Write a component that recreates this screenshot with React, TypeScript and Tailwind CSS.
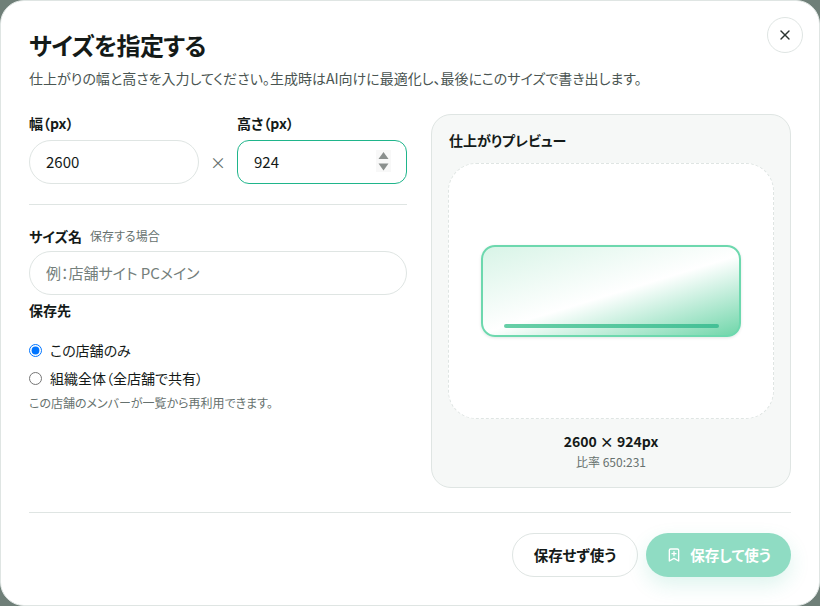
import React from 'react';
import { BookmarkPlus, X } from 'lucide-react';

const FONT = "font-['Noto_Sans_CJK_JP','Noto_Sans',sans-serif] [font-feature-settings:'palt']";

export default function App() {
  return (
    <div className={`h-[606px] w-[820px] overflow-hidden bg-[#6f7f78] ${FONT}`}>
      <div className="relative flex h-[606px] w-[820px] flex-col rounded-[24px] border border-[#dfe5e3] bg-white px-[28px] pt-[27px] text-[#141a18]">
        <button className="absolute right-[16px] top-[16px] flex h-[36px] w-[36px] items-center justify-center rounded-full border border-[#dfe5e3] bg-white text-[#2b3431]">
          <X className="h-4 w-4" strokeWidth={2} />
        </button>

        {/* Header */}
        <h2 className="text-[24px] font-bold leading-[34px] tracking-[-0.6px]">サイズを指定する</h2>
        <p className="mt-[6px] text-[14px] leading-[20px] text-[#4a5552]">
          仕上がりの幅と高さを入力してください。生成時はAI向けに最適化し、最後にこのサイズで書き出します。
        </p>

        <div className="mt-[26px] grid grid-cols-[378px_360px] gap-[24px]">
          {/* Inputs */}
          <div className="flex flex-col">
            <div className="flex items-end">
              <label className="flex w-[170px] flex-col gap-[8px]">
                <span className="text-[14px] font-bold leading-[18px]">幅（px）</span>
                <input
                  type="number"
                  defaultValue={2600}
                  className="h-[44px] rounded-[22px] border border-[#dfe5e3] bg-white px-[16px] pb-[2px] text-[15px] outline-none [appearance:textfield] [&::-webkit-inner-spin-button]:appearance-none"
                />
              </label>
              <span className="flex h-[44px] w-[38px] items-center justify-center text-[16px] text-[#66716e]">×</span>
              <label className="flex w-[170px] flex-col gap-[8px]">
                <span className="text-[14px] font-bold leading-[18px]">高さ（px）</span>
                <span className="relative block">
                  <input
                    type="number"
                    defaultValue={924}
                    className="h-[44px] w-full rounded-[12px] border border-[#1fb58b] bg-white px-[16px] pb-[2px] text-[15px] outline-none [appearance:textfield] [&::-webkit-inner-spin-button]:appearance-none"
                  />
                  {/* spin button */}
                  <span className="absolute right-[16px] top-[10px] block h-[22px] w-[15px] bg-[#f8f8f8]">
                    <svg viewBox="0 0 15 22" className="h-[22px] w-[15px]" fill="#8a8f8d">
                      <path d="M7.5 2 L12.5 9 H2.5 Z" />
                      <path d="M7.5 20.5 L12.5 13.5 H2.5 Z" />
                    </svg>
                  </span>
                </span>
              </label>
            </div>

            <div className="mt-[20px] border-t border-[#dfe5e3]" />

            <div className="mt-[21px] flex items-center gap-[8px] leading-[20px]">
              <span className="text-[14px] font-bold">サイズ名</span>
              <span className="text-[12px] text-[#66716e]">保存する場合</span>
            </div>
            <input
              placeholder="例：店舗サイト PCメイン"
              className="mt-[5px] h-[44px] rounded-[22px] border border-[#dfe5e3] bg-white px-[16px] pb-[2px] text-[15px] outline-none placeholder:text-[#75807c]"
            />

            <div className="mt-[5px] text-[14px] font-bold leading-[20px]">保存先</div>

            <label className="mt-[20px] flex h-[20px] items-center gap-[8px] text-[14px] leading-[20px]">
              <input type="radio" name="scope" defaultChecked className="m-0 h-[13px] w-[13px]" />
              この店舗のみ
            </label>
            <label className="mt-[8px] flex h-[20px] items-center gap-[8px] text-[14px] leading-[20px]">
              <input type="radio" name="scope" className="m-0 h-[13px] w-[13px]" />
              組織全体（全店舗で共有）
            </label>
            <p className="mt-[7px] text-[12px] leading-[16px] text-[#66716e]">この店舗のメンバーが一覧から再利用できます。</p>
          </div>

          {/* Preview */}
          <div className="flex h-[374px] flex-col rounded-[20px] border border-[#dfe5e3] bg-[#f6f8f7] px-[16px] pt-[16px]">
            <div className="ml-[1px] text-[14px] font-bold leading-[18px]">仕上がりプレビュー</div>
            <div className="mt-[14px] flex h-[256px] items-center justify-center rounded-[28px] border border-dashed border-[#dfe5e3] bg-white">
              <div className="relative h-[92px] w-[260px] rounded-[14px] border-2 border-[#6dd8ae] bg-[linear-gradient(163deg,#d8f4e7_0%,#ffffff_52%,#70d6aa_100%)] shadow-[0_1px_3px_rgba(20,60,45,0.12)]">
                <div className="absolute bottom-[7px] left-[21px] h-[4px] w-[215px] rounded-full bg-gradient-to-r from-[#67cfa7] to-[#43c096]" />
              </div>
            </div>
            <div className="mt-[12px] text-center text-[14px] font-bold leading-[20px]">2600 × 924px</div>
            <div className="mt-[3px] text-center text-[12px] leading-[16px] text-[#66716e]">比率 650:231</div>
          </div>
        </div>

        {/* Footer */}
        <div className="mt-[24px] flex justify-end gap-[8px] border-t border-[#dfe5e3] pt-[20px]">
          <button className="h-[44px] w-[126px] rounded-[22px] border border-[#dfe5e3] bg-white text-[14.5px] font-bold">保存せず使う</button>
          <button className="flex h-[44px] w-[145px] items-center justify-center gap-[8px] rounded-[22px] bg-[#8fdcc3] text-[14.5px] font-bold text-white shadow-[0_8px_20px_rgba(31,181,139,0.15)]">
            <BookmarkPlus className="h-4 w-4" strokeWidth={2} />
            保存して使う
          </button>
        </div>
      </div>
    </div>
  );
}
